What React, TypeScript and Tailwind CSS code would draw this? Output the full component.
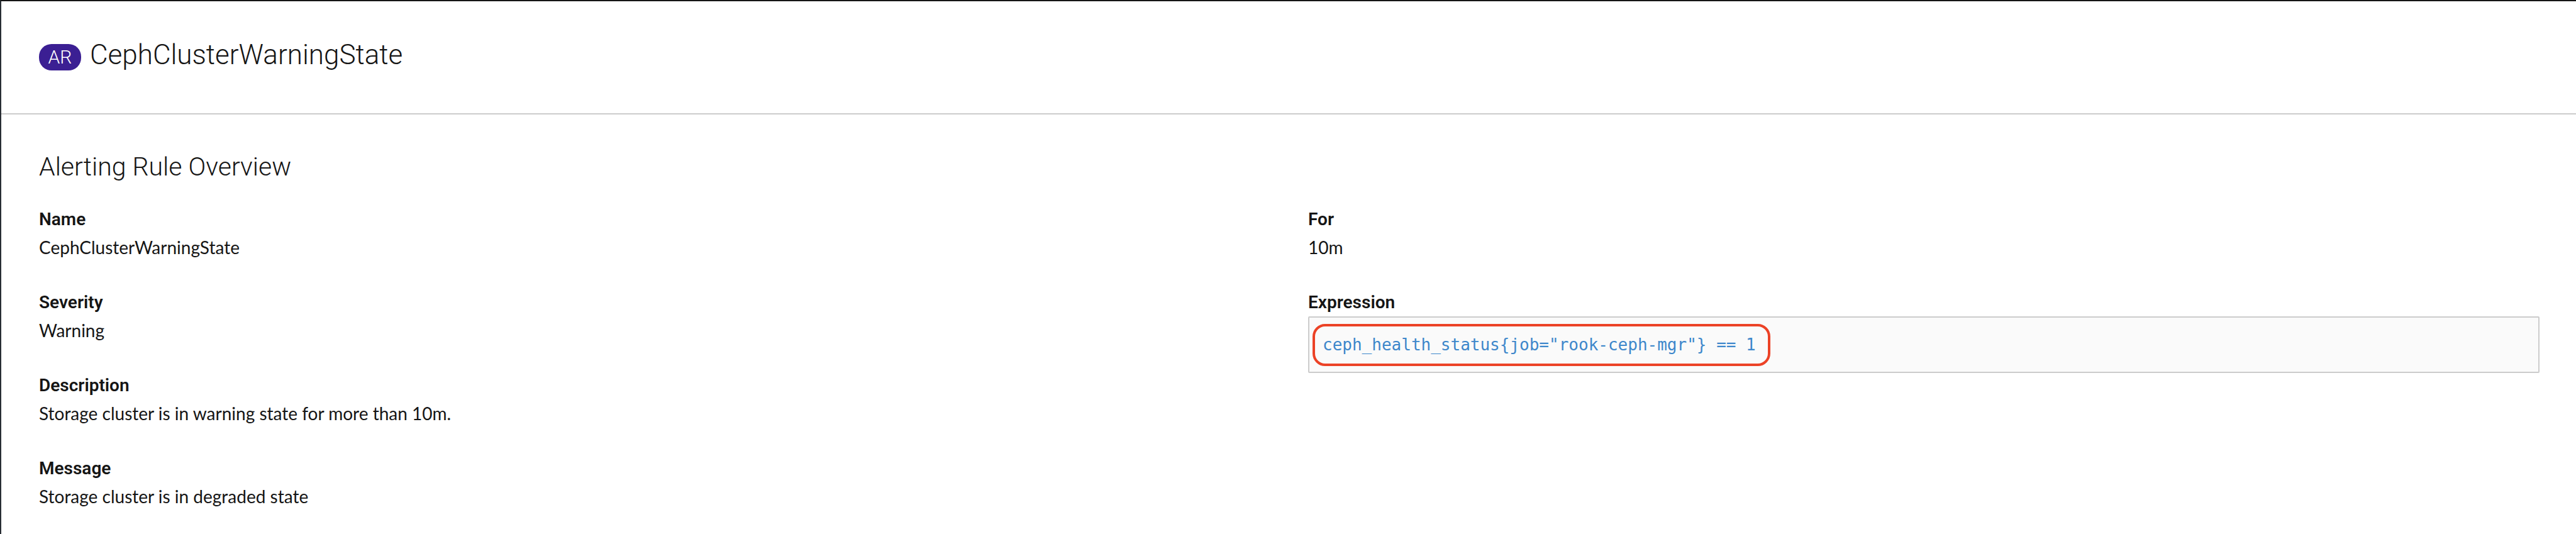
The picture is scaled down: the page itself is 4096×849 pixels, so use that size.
import type { ReactNode } from "react";

type FieldProps = { label: string; children: ReactNode };

function Field({ label, children }: FieldProps) {
  return (
    <div>
      <dt className="text-[28px] leading-10 font-semibold">{label}</dt>
      {children}
    </div>
  );
}

function Value({ children }: { children: ReactNode }) {
  return (
    <dd className="mt-1 font-['Lato','Liberation_Sans',sans-serif] text-[28px] leading-10">
      {children}
    </dd>
  );
}

export default function App() {
  return (
    <div className="min-h-screen border-t-2 border-l-2 border-t-[#151515] border-l-[#292e34] bg-white font-['Roboto','Liberation_Sans',sans-serif] text-[#151515]">
      <header className="flex h-[180px] items-center gap-3.5 border-b-2 border-[#cccccc] pb-2 pl-[60px]">
        <span className="mt-2 flex h-[42px] w-[67px] items-center justify-center rounded-[20px] bg-[#3b1f93] text-[30px] leading-none font-light text-white">
          AR
        </span>
        <h1 className="text-[44px] leading-[52px] font-light">CephClusterWarningState</h1>
      </header>
      <main className="pt-[59px] pr-[58px] pl-[60px]">
        <h2 className="text-[41px] leading-[48px] font-light">Alerting Rule Overview</h2>
        <div className="mt-10 grid grid-cols-2 gap-[60px]">
          <dl className="flex flex-col gap-12">
            <Field label="Name">
              <Value>CephClusterWarningState</Value>
            </Field>
            <Field label="Severity">
              <Value>Warning</Value>
            </Field>
            <Field label="Description">
              <Value>Storage cluster is in warning state for more than 10m.</Value>
            </Field>
            <Field label="Message">
              <Value>Storage cluster is in degraded state</Value>
            </Field>
          </dl>
          <dl className="flex flex-col gap-12">
            <Field label="For">
              <Value>10m</Value>
            </Field>
            <Field label="Expression">
              <dd className="mt-0.5 flex h-[90px] items-center rounded-[2px] border-2 border-[#cccccc] bg-[#fafafa] pl-[5px]">
                <code className="rounded-[20px] border-4 border-[#ec4226] py-[11px] pr-[19px] pl-3 font-['DejaVu_Sans_Mono',monospace] text-[26px] leading-[37px] text-[#3d87cb]">
                  {'ceph_health_status{job="rook-ceph-mgr"} == 1'}
                </code>
              </dd>
            </Field>
          </dl>
        </div>
      </main>
    </div>
  );
}
